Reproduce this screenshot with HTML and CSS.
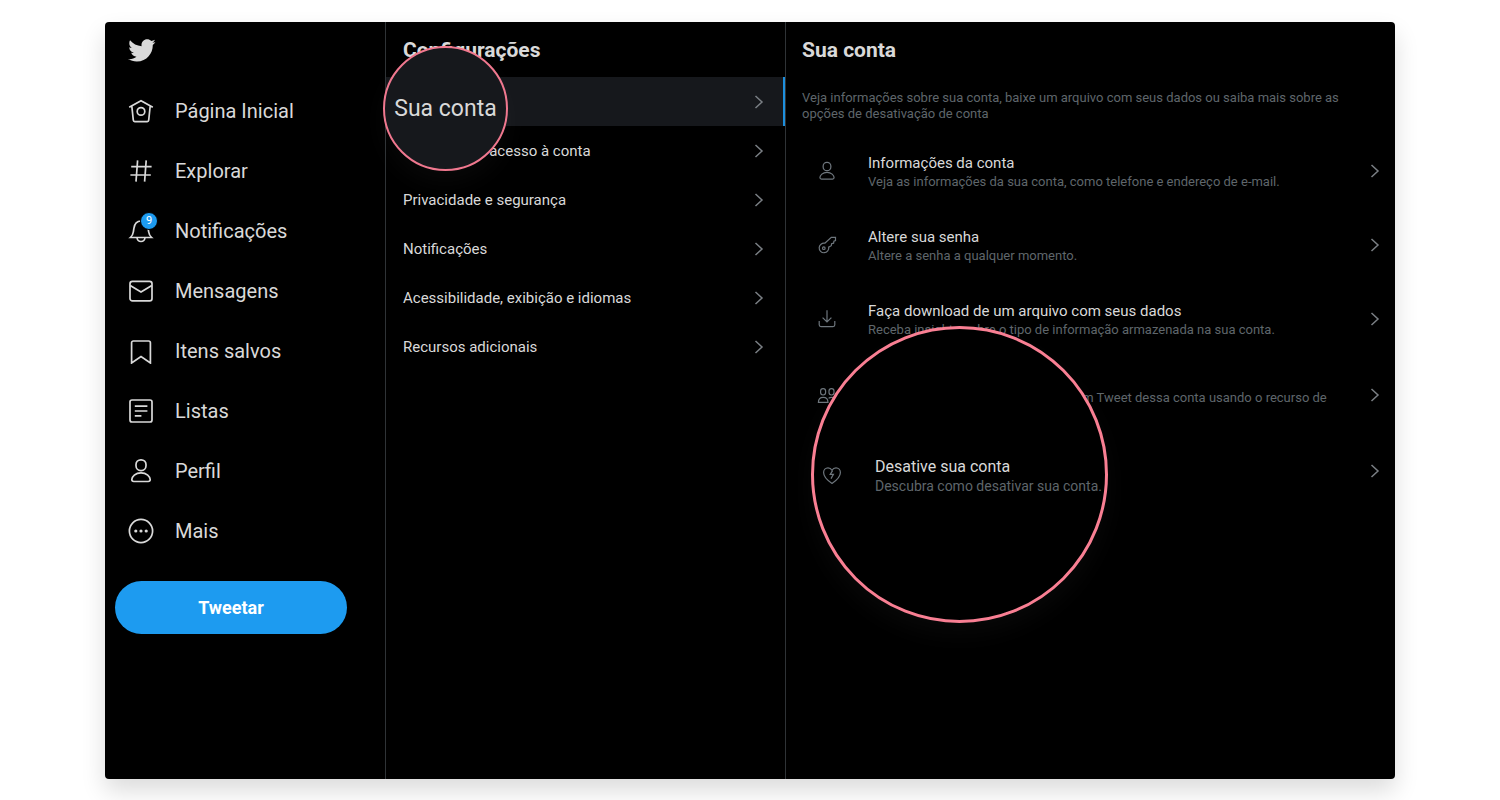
FILE: index.html
```html
<!DOCTYPE html>
<html lang="pt-BR">
<head>
  <meta charset="UTF-8">
  <meta name="viewport" content="width=device-width, initial-scale=1.0">
  <title>Sua conta / Twitter</title>
  <link rel="stylesheet" href="styles.css">
</head>
<body>
  <svg class="sprite" aria-hidden="true">
    <symbol id="chevron" viewBox="0 0 10 16"><path d="M1.500 2l6.500 6-6.500 6"/></symbol>
    <symbol id="person" viewBox="0 0 26 26">
      <rect x="8" y="1.8" width="10" height="10.8" rx="4.8"/>
      <path d="M3.8 21.6c0-3 3.6-6.8 9.2-6.8s9.2 3.8 9.2 6.8c0 1.3-.8 1.9-2 1.9H5.8c-1.2 0-2-.6-2-1.9z"/>
    </symbol>
  </svg>

  <div class="app">
    <nav class="sidebar">
      <a class="logo" href="#" aria-label="Twitter">
        <svg viewBox="0 0 24 24"><path d="M23.643 4.937c-.835.37-1.732.62-2.675.733.962-.576 1.7-1.49 2.048-2.578-.9.534-1.897.922-2.958 1.13-.85-.904-2.06-1.47-3.4-1.47-2.572 0-4.658 2.086-4.658 4.66 0 .364.042.718.12 1.06-3.873-.195-7.304-2.05-9.602-4.868-.4.69-.63 1.49-.63 2.342 0 1.616.823 3.043 2.072 3.878-.764-.025-1.482-.234-2.11-.583v.06c0 2.257 1.605 4.14 3.737 4.568-.392.106-.803.162-1.227.162-.3 0-.593-.028-.877-.082.593 1.85 2.313 3.198 4.352 3.234-1.595 1.25-3.604 1.995-5.786 1.995-.376 0-.747-.022-1.112-.065 2.062 1.323 4.51 2.093 7.14 2.093 8.57 0 13.255-7.098 13.255-13.254 0-.2-.005-.402-.014-.602.91-.658 1.7-1.477 2.323-2.41z"/></svg>
      </a>
      <a class="nav-link" href="#">
        <svg class="icon" viewBox="0 0 26 26"><path d="M1.2 9.2L13 2.8l11.8 6.4M3.8 8l1.5 14.2c.1.9.6 1.4 1.4 1.4h12.6c.8 0 1.3-.5 1.4-1.4L22.2 8"/><circle cx="13" cy="13.4" r="3.8"/></svg>
        Página Inicial
      </a>
      <a class="nav-link" href="#">
        <svg class="icon" viewBox="0 0 26 26"><path d="M3.2 8.6h20.4M2.4 17h20.4M9.6 2.4L8 23.6M18.2 2.4l-1.6 21.2"/></svg>
        Explorar
      </a>
      <a class="nav-link" href="#">
        <span class="bell">
          <svg class="icon" viewBox="0 0 26 26"><path d="M2.4 19.5c1.7-1.6 2.6-3 2.9-5.5l.6-3.7C6.5 5.9 9 3 13 3s6.5 2.9 7.1 7.3l.6 3.7c.3 2.5 1.2 3.9 2.9 5.5zM9 19.5a4 4 0 0 0 8 0"/></svg>
          <span class="badge">9</span>
        </span>
        Notificações
      </a>
      <a class="nav-link" href="#">
        <svg class="icon" viewBox="0 0 26 26"><rect x="2" y="3.4" width="22" height="19.4" rx="2.4"/><path d="M2.2 7.4L13 14l10.8-6.6"/></svg>
        Mensagens
      </a>
      <a class="nav-link" href="#">
        <svg class="icon" viewBox="0 0 26 26"><path d="M3.6 25V4.8C3.6 3.7 4.3 3 5.4 3h15.2c1.100 0 1.800.700 1.800 1.800V25L13 18.600z"/></svg>
        Itens salvos
      </a>
      <a class="nav-link" href="#">
        <svg class="icon" viewBox="0 0 26 26"><rect x="2" y="2" width="22" height="22" rx="2"/><path d="M6.8 8.2h12.6M6.8 13h12.6M6.8 17.8h6.6"/></svg>
        Listas
      </a>
      <a class="nav-link" href="#">
        <svg class="icon"><use href="#person"/></svg>
        Perfil
      </a>
      <a class="nav-link" href="#">
        <svg class="icon" viewBox="0 0 26 26"><circle cx="13" cy="13" r="11.6"/><g class="dots"><circle cx="7.8" cy="13" r="1.6"/><circle cx="13" cy="13" r="1.6"/><circle cx="18.2" cy="13" r="1.6"/></g></svg>
        Mais
      </a>
      <button class="tweet-btn" type="button">Tweetar</button>
    </nav>

    <section class="settings">
      <h1>Configurações</h1>
      <a class="setting active" href="#">
        <span class="lens lens-small">Sua conta</span>
        <svg class="chevron"><use href="#chevron"/></svg>
      </a>
      <a class="setting" href="#">Segurança e acesso à conta <svg class="chevron"><use href="#chevron"/></svg></a>
      <a class="setting" href="#">Privacidade e segurança <svg class="chevron"><use href="#chevron"/></svg></a>
      <a class="setting" href="#">Notificações <svg class="chevron"><use href="#chevron"/></svg></a>
      <a class="setting" href="#">Acessibilidade, exibição e idiomas <svg class="chevron"><use href="#chevron"/></svg></a>
      <a class="setting" href="#">Recursos adicionais <svg class="chevron"><use href="#chevron"/></svg></a>
    </section>

    <main class="account">
      <h2>Sua conta</h2>
      <p class="intro">Veja informações sobre sua conta, baixe um arquivo com seus dados ou saiba mais sobre as opções de desativação de conta</p>
      <a class="option" href="#">
        <svg class="icon-small person"><use href="#person"/></svg>
        <span class="option-text">
          <span class="option-title">Informações da conta</span>
          <span class="option-desc">Veja as informações da sua conta, como telefone e endereço de e-mail.</span>
        </span>
        <svg class="chevron"><use href="#chevron"/></svg>
      </a>
      <a class="option" href="#">
        <svg class="icon-small" viewBox="0 0 20 20"><path d="M7.8 8.2l6.5-5.8h4.2v3.200l-1.600.600-.300 2-2 .500-.300 2-2.600 1.400A4.800 4.800 0 1 1 7.800 8.200z"/><circle cx="6.8" cy="13.2" r="1.3"/></svg>
        <span class="option-text">
          <span class="option-title">Altere sua senha</span>
          <span class="option-desc">Altere a senha a qualquer momento.</span>
        </span>
        <svg class="chevron"><use href="#chevron"/></svg>
      </a>
      <a class="option" href="#">
        <svg class="icon-small" viewBox="0 0 20 20"><path d="M10 1.2V13M5.6 8.6L10 13l4.4-4.4M2.2 12v3.8c0 1.1.7 1.8 1.8 1.8h12c1.1 0 1.8-.7 1.8-1.8V12"/></svg>
        <span class="option-text">
          <span class="option-title">Faça download de um arquivo com seus dados</span>
          <span class="option-desc">Receba insights sobre o tipo de informação armazenada na sua conta.</span>
        </span>
        <svg class="chevron"><use href="#chevron"/></svg>
      </a>
      <a class="option" href="#">
        <svg class="icon-small" viewBox="0 0 20 20"><rect x="3.6" y="3.6" width="5" height="6.4" rx="2.4"/><rect x="12" y="3.6" width="5" height="6.4" rx="2.4"/><path d="M1.4 17.4c0-3 2-5 4.8-5s4.8 2 4.8 5zM11.6 13.2c.8-.5 1.8-.8 2.9-.8 2.7 0 4.6 2 4.6 5h-5.4"/></svg>
        <span class="option-text">
          <span class="option-title">Equipes do TweetDeck</span>
          <span class="option-desc">Convide qualquer pessoa para criar um Tweet dessa conta usando o recurso de Equipes do TweetDeck.</span>
        </span>
        <svg class="chevron"><use href="#chevron"/></svg>
      </a>
      <a class="option" href="#">
        <span class="lens lens-large">
          <svg class="icon-small" viewBox="0 0 20 20"><path d="M10 18.4C5 15.2 1.6 11.5 1.6 7.6c0-2.8 2-4.8 4.4-4.8 1.8 0 3.2 1 4 2.4.8-1.4 2.2-2.4 4-2.4 2.4 0 4.4 2 4.4 4.8 0 3.9-3.4 7.6-8.4 10.8z"/><path d="M10.6 5.6L8.2 9.4h3.2L9 13.6"/></svg>
          <span class="option-text">
            <span class="option-title">Desative sua conta</span>
            <span class="option-desc">Descubra como desativar sua conta.</span>
          </span>
        </span>
        <svg class="chevron"><use href="#chevron"/></svg>
      </a>
    </main>
  </div>
</body>
</html>
```

FILE: styles.css
```css
* {
  margin: 0;
  padding: 0;
  box-sizing: border-box;
}

body {
  font-family: Roboto, "Liberation Sans", sans-serif;
  min-height: 100vh;
  display: flex;
  padding: 22px 7% 21px;
  background: white;
  color: #d9d9d9;
}

a {
  color: inherit;
  text-decoration: none;
}

svg {
  fill: none;
  stroke: currentColor;
  stroke-width: 1.7;
  flex-shrink: 0;
}

.sprite {
  position: absolute;
  width: 0;
  height: 0;
}

.app {
  flex: 1;
  display: grid;
  grid-template-columns: 281px 400px 1fr;
  background: black;
  border-radius: 4px;
  box-shadow: 0 12px 24px rgba(0, 0, 0, 0.14);
}

/* Sidebar */
.sidebar {
  border-right: 1px solid #2f3336;
}

.logo {
  display: flex;
  align-items: center;
  height: 59px;
  padding: 0 0 3px 22px;
}

.logo svg {
  width: 29px;
  height: 29px;
  fill: currentColor;
  stroke: none;
}

.nav-link {
  display: flex;
  align-items: center;
  gap: 21px;
  height: 60px;
  padding-left: 23px;
  font-size: 20px;
}

.icon {
  display: block;
  width: 26px;
  height: 26px;
}

.dots {
  fill: currentColor;
  stroke: none;
}

.bell {
  position: relative;
}

.badge {
  position: absolute;
  top: -6px;
  right: -4px;
  width: 18px;
  height: 18px;
  border: 1px solid black;
  border-radius: 50%;
  background: #1d9bf0;
  color: white;
  font-size: 11px;
  line-height: 16px;
  text-align: center;
}

.tweet-btn {
  display: block;
  width: 232px;
  height: 53px;
  margin: 20px 0 0 10px;
  border: none;
  border-radius: 27px;
  background: #1d9bf0;
  color: white;
  font-family: inherit;
  font-size: 18px;
  font-weight: bold;
  cursor: pointer;
}

/* Settings list */
.settings {
  border-right: 1px solid #2f3336;
}

h1,
h2 {
  height: 55px;
  padding-left: 17px;
  font-size: 21px;
  line-height: 56px;
}

.setting {
  display: flex;
  align-items: center;
  justify-content: space-between;
  position: relative;
  height: 49px;
  padding: 0 21px 0 17px;
  font-size: 15px;
}

.setting.active {
  justify-content: flex-end;
  padding-right: 19px;
  background: #16181c;
  border-right: 2px solid #1d8fdd;
}

.chevron {
  width: 10px;
  height: 16px;
  color: #7a7f84;
  stroke-width: 1.5;
}

/* Account options */
.account h2 {
  padding-left: 16px;
}

.intro {
  padding: 13px 32px 12px 16px;
  color: #5f666b;
  font-size: 13px;
  line-height: 16px;
}

.option {
  display: flex;
  align-items: center;
  position: relative;
  min-height: 74px;
  padding: 12px 15px 12px 31px;
}

.option > .chevron {
  margin-left: auto;
}

.icon-small {
  width: 20px;
  height: 20px;
  margin-right: 31px;
  color: #6e767d;
  stroke-width: 1.2;
}

.icon-small.person {
  stroke-width: 1.6;
}

.option-text {
  max-width: 480px;
}

.option-title {
  display: block;
  font-size: 15px;
  line-height: 22px;
}

.option-desc {
  display: block;
  color: #5f666b;
  font-size: 13px;
  line-height: 16px;
}

/* Magnifier circles over the highlighted rows */
.lens {
  position: absolute;
  z-index: 1;
  display: flex;
  align-items: center;
  border-radius: 50%;
  box-shadow: 0 12px 24px rgba(255, 255, 255, 0.03);
}

.lens-small {
  top: -31px;
  left: -3px;
  width: 125px;
  height: 125px;
  justify-content: center;
  border: 2px solid #f0788f;
  background: #16181c;
  font-size: 23px;
}

.lens-large {
  top: -108px;
  left: 25px;
  width: 297px;
  height: 297px;
  padding-left: 8px;
  border: 3px solid #f97f93;
  background: black;
}

.lens-large .icon-small {
  margin-right: 33px;
}

.lens-large .option-title {
  font-size: 16px;
}

.lens-large .option-desc {
  font-size: 14px;
}
```
